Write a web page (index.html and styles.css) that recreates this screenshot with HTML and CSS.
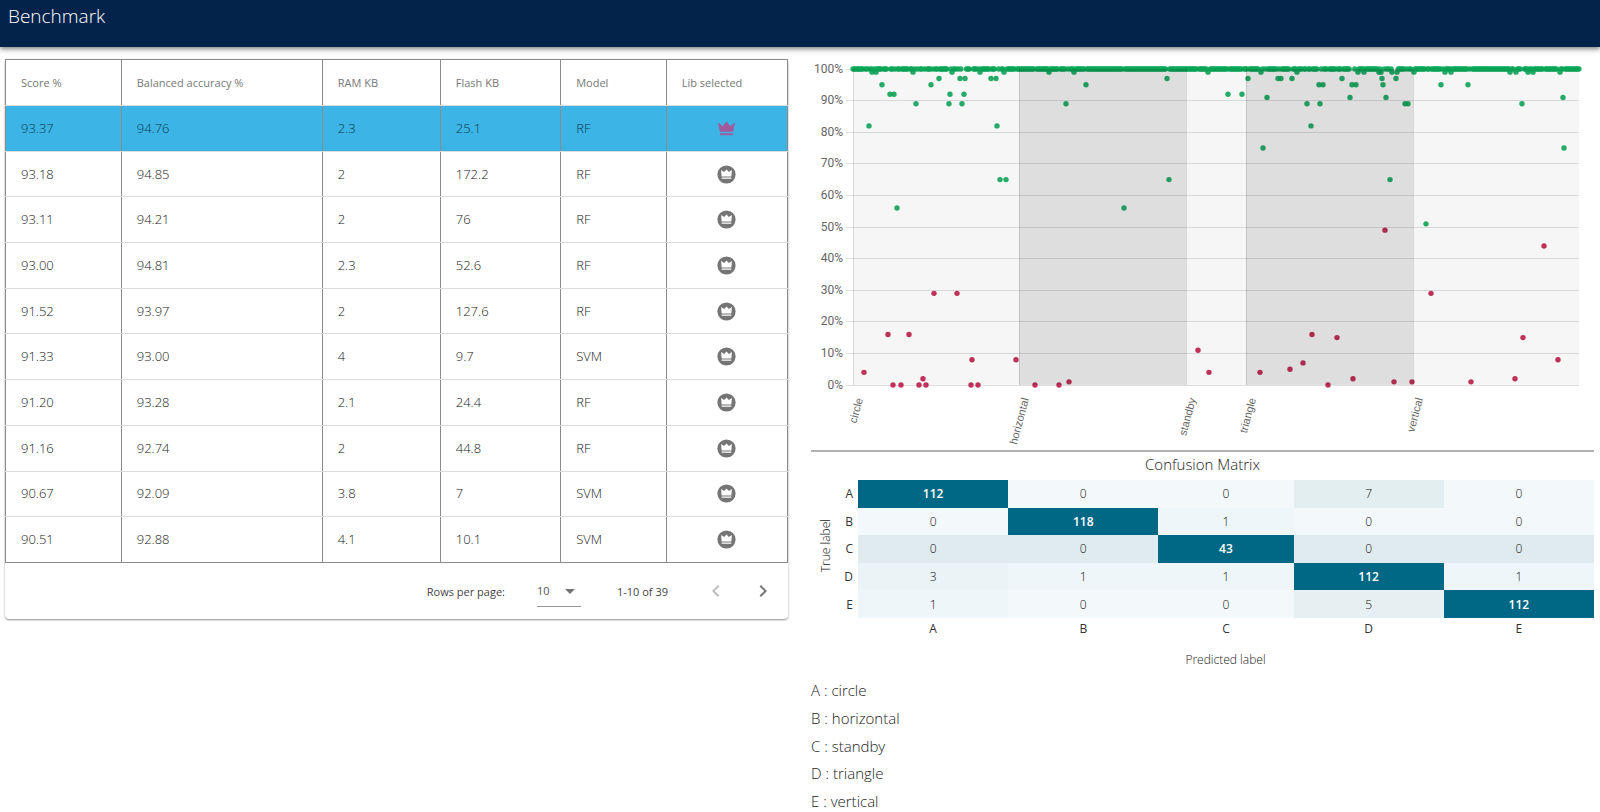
FILE: index.html
```html
<!DOCTYPE html>
<html lang="en">
<head>
<meta charset="utf-8">
<meta name="viewport" content="width=device-width, initial-scale=1">
<title>Benchmark</title>
<link rel="stylesheet" href="styles.css">
</head>
<body>
<svg class="symbols" aria-hidden="true">
  <symbol id="crown" viewBox="0 0 20 16">
    <path d="M1 1.500 6 5.600 10 .4l4 5.200 5-4.100L17 11.500H3z"/>
    <path d="M3 13h14v2H3z"/>
  </symbol>
  <symbol id="crown-badge" viewBox="0 0 20 20">
    <circle cx="10" cy="10" r="9.600" fill="#757575"/>
    <path fill="#fff" d="M4.300 5.300 7.500 7.300 10 4.800l2.500 2.500 3.200-2-.6 6.900H4.900zM4.900 13.100h10.200v1.300H4.900z"/>
  </symbol>
</svg>
<header class="topbar"><h1 class="topbar-title">Benchmark</h1></header>
<main class="page">
  <section class="card" aria-label="Benchmark results">
    <table class="results">
      <colgroup><col class="c-score"><col class="c-accuracy"><col class="c-ram"><col class="c-flash"><col class="c-model"><col class="c-lib"></colgroup>
      <thead>
        <tr><th scope="col">Score %</th><th scope="col">Balanced accuracy %</th><th scope="col">RAM KB</th><th scope="col">Flash KB</th><th scope="col">Model</th><th scope="col">Lib selected</th></tr>
      </thead>
      <tbody id="results-body"></tbody>
    </table>
    <div class="pager">
      <label class="pager-label" for="rows">Rows per page:</label>
      <span class="pager-select">
        <select id="rows"><option>10</option><option>25</option><option>50</option></select>
        <svg viewBox="0 0 10 5" aria-hidden="true"><path d="M0 0h10L5 5z"/></svg>
      </span>
      <span class="pager-range">1-10 of 39</span>
      <button class="pager-button" type="button" aria-label="Previous page" disabled><svg viewBox="0 0 24 24"><path d="M15.400 7.400 14 6l-6 6 6 6 1.400-1.400L10.800 12z"/></svg></button>
      <button class="pager-button" type="button" aria-label="Next page"><svg viewBox="0 0 24 24"><path d="M10 6 8.600 7.400l4.600 4.600-4.600 4.600L10 18l6-6z"/></svg></button>
    </div>
  </section>
  <section class="details">
    <svg class="chart" id="chart" viewBox="0 0 783 391" role="img" aria-label="Confidence of each sample by class"></svg>
    <hr class="rule">
    <h2 class="matrix-title">Confusion Matrix</h2>
    <div class="matrix-wrap">
      <div class="true-label"><span>True label</span></div>
      <table class="matrix">
        <colgroup><col class="m-head"><col class="m-wide"><col class="m-wide"><col class="m-mid"><col class="m-wide"><col class="m-wide"></colgroup>
        <tbody>
          <tr><th scope="row">A</th><td class="hit">112</td><td>0</td><td>0</td><td class="t7">7</td><td>0</td></tr>
          <tr><th scope="row">B</th><td>0</td><td class="hit">118</td><td class="t1">1</td><td>0</td><td>0</td></tr>
          <tr><th scope="row">C</th><td class="tc">0</td><td class="tc">0</td><td class="hit">43</td><td class="tc">0</td><td class="tc">0</td></tr>
          <tr><th scope="row">D</th><td class="t3">3</td><td class="t1">1</td><td class="t1">1</td><td class="hit">112</td><td class="t1">1</td></tr>
          <tr><th scope="row">E</th><td class="t1">1</td><td>0</td><td>0</td><td class="t5">5</td><td class="hit">112</td></tr>
        </tbody>
        <tfoot>
          <tr><td></td><th scope="col">A</th><th scope="col">B</th><th scope="col">C</th><th scope="col">D</th><th scope="col">E</th></tr>
        </tfoot>
      </table>
    </div>
    <p class="predicted-label">Predicted label</p>
    <ul class="legend">
      <li>A : circle</li>
      <li>B : horizontal</li>
      <li>C : standby</li>
      <li>D : triangle</li>
      <li>E : vertical</li>
    </ul>
  </section>
</main>
<script src="app.js"></script>
</body>
</html>
```
FILE: styles.css
```css
* { box-sizing: border-box; }

body {
  margin: 0;
  background: #fff;
  color: #222;
  font-family: "Open Sans", "Noto Sans", sans-serif;
  font-size: 13px;
  font-weight: 300;
}

.symbols { position: absolute; width: 0; height: 0; }

.topbar {
  height: 47px;
  padding: 2px 8px;
  background: #03234b;
  box-shadow: 0 2px 5px rgba(0, 0, 0, 0.5);
}

.topbar-title {
  margin: 0;
  color: #fff;
  font-size: 19px;
  font-weight: 300;
  line-height: 28px;
}

.page {
  display: grid;
  grid-template-columns: minmax(0, 1fr) minmax(0, 1fr);
  gap: 23px;
  align-items: start;
  padding: 12px 6px 0 5px;
}

.card {
  border-radius: 4px;
  box-shadow: 0 1px 2px rgba(0, 0, 0, 0.45);
}

.results {
  width: 100%;
  height: 504px;
  table-layout: fixed;
  border-collapse: collapse;
  border: 1px solid #8b8b8b;
}

.c-score { width: 14.8%; }
.c-accuracy { width: 25.7%; }
.c-ram { width: 15.1%; }
.c-flash { width: 15.4%; }
.c-model { width: 13.5%; }
.c-lib { width: 15.5%; }

.results thead tr { height: 46px; }

.results th,
.results td {
  padding: 0 15px 1px;
  border-right: 1px solid #8b8b8b;
  border-bottom: 1px solid #dcdcdc;
  text-align: left;
}

.results tbody tr:last-child td { border-bottom-color: #8b8b8b; }

.results th {
  color: #777;
  font-size: 11px;
  font-weight: 400;
}

.results .selected td {
  background: #3cb4e6;
  color: #0b3a4d;
}

.results .lib { text-align: center; }

.lib-button {
  display: inline-flex;
  padding: 0;
  border: 0;
  background: none;
  color: #a35a9c;
  vertical-align: middle;
}

.lib-button svg { width: 19px; height: 19px; fill: currentColor; }

.pager {
  display: flex;
  align-items: center;
  justify-content: flex-end;
  height: 56px;
  padding-right: 13px;
  color: #444;
  font-size: 11px;
  font-weight: 400;
}

.pager-select {
  position: relative;
  width: 44px;
  margin: 0 36px 0 32px;
}

.pager-select select {
  width: 100%;
  height: 32px;
  padding: 0;
  border: 0;
  border-bottom: 1px solid #949494;
  border-radius: 0;
  background: none;
  color: #555;
  font: inherit;
  appearance: none;
}

.pager-select svg {
  position: absolute;
  top: 14px;
  right: 6px;
  width: 10px;
  height: 5px;
  fill: #757575;
  pointer-events: none;
}

.pager-range { margin-right: 36px; }

.pager-button {
  display: flex;
  padding: 0;
  border: 0;
  background: none;
  color: #757575;
}

.pager-button + .pager-button { margin-left: 23px; }
.pager-button:disabled { color: #bdbdbd; }
.pager-button svg { width: 24px; height: 24px; fill: currentColor; }

.chart {
  display: block;
  width: 100%;
  font-family: Roboto, "Liberation Sans", sans-serif;
  font-size: 12px;
  font-weight: 400;
}

.chart text { fill: #666; text-anchor: end; }
.chart .class-name { font-family: "Liberation Sans", sans-serif; font-size: 11px; }
.chart .grid { stroke: rgba(0, 0, 0, 0.12); }
.chart .band { fill: rgba(0, 0, 0, 0.035); }
.chart .band-dark { fill: rgba(0, 0, 0, 0.13); }
.chart .good { fill: #0aa658; fill-opacity: 0.88; }
.chart .bad { fill: #c0224e; fill-opacity: 0.92; }

.rule {
  height: 2px;
  margin: 0;
  border: 0;
  background: #b0b0b0;
}

.matrix-title {
  margin: 0;
  padding: 0 46px 4px;
  font-size: 15px;
  font-weight: 300;
  line-height: 24px;
  text-align: center;
}

.matrix-wrap { display: flex; }

.true-label {
  display: flex;
  align-items: center;
  justify-content: center;
  width: 28px;
  height: 132px;
  margin-right: 4px;
  font-size: 12px;
}

.true-label span { writing-mode: vertical-rl; transform: rotate(180deg); }

.matrix {
  flex: 1;
  height: 159px;
  table-layout: fixed;
  border-collapse: collapse;
  color: #111;
  font-size: 12px;
}

.m-head { width: 2%; }
.m-wide { width: 20%; }
.m-mid { width: 18%; }

.matrix th,
.matrix td { padding: 0; text-align: center; }

.matrix th { color: #333; font-weight: 400; }
.matrix tbody th { padding-right: 5px; text-align: right; }
.matrix tbody td { background: #f3f8fb; }
.matrix tbody .t1 { background: #eff6f9; }
.matrix tbody .t3 { background: #eaf3f5; }
.matrix tbody .t5 { background: #e6f0f3; }
.matrix tbody .t7 { background: #e2eef0; }
.matrix tbody .tc { background: #e0ebf0; }
.matrix tbody .hit { background: #006884; color: #fff; font-weight: 600; }
.matrix tbody tr { height: 27px; }
.matrix tfoot tr { height: 21px; }

.predicted-label {
  margin: 11px 0 0;
  padding-left: 46px;
  font-size: 12px;
  line-height: 20px;
  text-align: center;
}

.legend {
  display: grid;
  align-content: space-between;
  min-height: 138px;
  margin: 7px 0 0;
  padding: 0;
  font-size: 15px;
  line-height: 27px;
  list-style: none;
}
```
FILE: app.js
```js
const results = [
  ["93.37", "94.76", "2.3", "25.1", "RF"],
  ["93.18", "94.85", "2", "172.2", "RF"],
  ["93.11", "94.21", "2", "76", "RF"],
  ["93.00", "94.81", "2.3", "52.6", "RF"],
  ["91.52", "93.97", "2", "127.6", "RF"],
  ["91.33", "93.00", "4", "9.7", "SVM"],
  ["91.20", "93.28", "2.1", "24.4", "RF"],
  ["91.16", "92.74", "2", "44.8", "RF"],
  ["90.67", "92.09", "3.8", "7", "SVM"],
  ["90.51", "92.88", "4.1", "10.1", "SVM"]
];

document.getElementById("results-body").innerHTML = results.map((row, i) => {
  const cells = row.map((value) => `<td>${value}</td>`).join("");
  const icon = i === 0 ? "crown" : "crown-badge";
  return `<tr${i === 0 ? ' class="selected"' : ""}>${cells}<td class="lib">` +
    `<button class="lib-button" type="button" aria-label="Select ${row[0]}"><svg><use href="#${icon}"/></svg></button></td></tr>`;
}).join("");

// Plot area inside the chart's viewBox.
const plot = { left: 42, right: 768, top: 10, bottom: 326 };
const yOf = (percent) => plot.bottom - percent * (plot.bottom - plot.top) / 100;

// Sample positions along the x axis, keyed by confidence.
const samples = {
  99: [19, 23, 60, 99, 127, 151, 196, 221, 355, 408, 444, 505, 511, 526, 528, 539, 544, 561, 592, 598, 657, 663, 675, 680, 707],
  97: [86, 107, 112, 138, 143, 314, 395, 425, 428, 439, 489, 529, 543],
  95: [29, 78, 233, 466, 470, 499, 503, 530, 588, 615],
  92: [37, 41, 97, 111, 375, 389],
  91: [414, 497, 533, 710],
  89: [63, 96, 109, 213, 454, 467, 552, 555, 669],
  82: [16, 144, 458],
  75: [410, 711],
  65: [147, 153, 316, 537],
  56: [44, 271],
  51: [573],
  49: [532],
  44: [691],
  29: [81, 104, 578],
  16: [35, 56, 459],
  15: [484, 670],
  11: [345],
  8: [119, 163, 705],
  7: [450],
  5: [437],
  4: [11, 356, 407],
  2: [70, 500, 662],
  1: [216, 541, 559, 618],
  0: [40, 48, 66, 73, 118, 125, 182, 206, 475]
};

const classes = [
  { name: "circle", start: 0, end: 166 },
  { name: "horizontal", start: 166, end: 333 },
  { name: "standby", start: 333, end: 393 },
  { name: "triangle", start: 393, end: 560 },
  { name: "vertical", start: 560, end: 726 }
];

const parts = [];
for (let p = 0; p <= 100; p += 10) {
  const y = Math.floor(yOf(p)) + 0.5;
  parts.push(`<line class="grid" x1="35" x2="${plot.right}" y1="${y}" y2="${y}"/>`);
  parts.push(`<text x="32" y="${Math.round(y) + 3}">${p}%</text>`);
}

const dot = (x, p) =>
  `<circle class="${p > 50 ? "good" : "bad"}" cx="${plot.left + x}" cy="${yOf(p)}" r="2.7"/>`;
const taken = Object.values(samples).flat();
const total = 518;
for (let i = 0; i <= total; i++) {
  const x = i * (plot.right - plot.left) / total;
  if (!taken.some((t) => Math.abs(t - x) < 0.7)) parts.push(dot(x, 100));
}
for (const [percent, xs] of Object.entries(samples)) {
  for (const x of xs) parts.push(dot(x, Number(percent)));
}

classes.forEach((c, i) => {
  const x = plot.left + c.start;
  parts.push(`<rect class="${i % 2 ? "band-dark" : "band"}" x="${x}" y="${plot.top}" width="${c.end - c.start}" height="${plot.bottom - plot.top}"/>`);
  parts.push(`<line class="grid" x1="${x + 0.5}" x2="${x + 0.5}" y1="${plot.top}" y2="${plot.bottom}"/>`);
  parts.push(`<text class="class-name" transform="translate(${x + 10} 340) rotate(-75)">${c.name}</text>`);
});
document.getElementById("chart").innerHTML = parts.join("");
```
